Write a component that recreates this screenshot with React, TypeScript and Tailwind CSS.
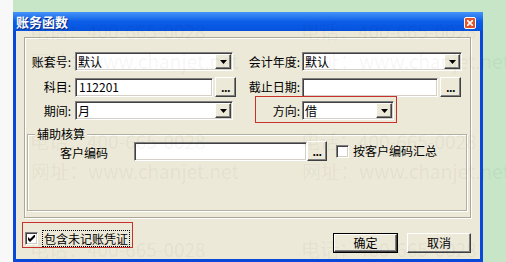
import type { ReactNode } from "react";

const raised =
  "border border-t-white border-l-white border-b-[#404040] border-r-[#404040] shadow-[inset_-1px_-1px_0_#808080] bg-[#ece9d8]";
const sunken =
  "border border-t-[#808080] border-l-[#808080] border-b-white border-r-white shadow-[inset_1px_1px_0_#404040,inset_-1px_-1px_0_#d4d0c8] bg-white";

function Arrow() {
  return (
    <svg width="7" height="4" viewBox="0 0 7 4">
      <path d="M0 0h7L3.5 4z" fill="#000" />
    </svg>
  );
}

function Combo({ value, w }: { value: string; w: string }) {
  return (
    <div className={`${sunken} ${w} h-[19px] flex items-center pl-[2px] pr-[1px]`}>
      <span className="flex-1 leading-none">{value}</span>
      <div className={`${raised} w-[16px] h-[15px] flex items-center justify-center`}>
        <Arrow />
      </div>
    </div>
  );
}

function Input({ value = "", w }: { value?: string; w: string }) {
  return (
    <div className={`${sunken} ${w} h-[19px] flex items-center pl-[3px] leading-none`}>
      {value}
    </div>
  );
}

function Dots({ w = "w-[21px]" }: { w?: string }) {
  return (
    <div className={`${raised} ${w} h-[20px] flex items-end justify-center pb-[3px] font-bold text-[11px] leading-none tracking-[-0.5px]`}>
      ...
    </div>
  );
}

function Check({ checked }: { checked?: boolean }) {
  return (
    <div className={`${sunken} w-[13px] h-[13px] flex items-center justify-center`}>
      {checked && (
        <svg width="7" height="7" viewBox="0 0 7 7">
          <path d="M0 2v3l2 2 5-5V-1L2 4z" fill="#000" />
        </svg>
      )}
    </div>
  );
}

function Label({ children, w }: { children: ReactNode; w: string }) {
  return <span className={`${w} text-right leading-none`}>{children}</span>;
}

const marks = [
  { t: "电话：400-665-0028", x: "left-[30px]", y: "top-[21px]" },
  { t: "电话：400-665-0028", x: "left-[301px]", y: "top-[21px]" },
  { t: "网址：www.chanjet.net", x: "left-[31px]", y: "top-[51px]" },
  { t: "网址：www.chanjet.net", x: "left-[302px]", y: "top-[51px]" },
  { t: "电话：400-665-0028", x: "left-[30px]", y: "top-[131px]" },
  { t: "电话：400-665-0028", x: "left-[301px]", y: "top-[131px]" },
  { t: "网址：www.chanjet.net", x: "left-[31px]", y: "top-[161px]" },
  { t: "网址：www.chanjet.net", x: "left-[302px]", y: "top-[161px]" },
  { t: "电话：400-665-0028", x: "left-[30px]", y: "top-[239px]" },
  { t: "电话：400-665-0028", x: "left-[301px]", y: "top-[239px]" },
];

export default function App() {
  return (
    <div className="relative flex w-[506px] h-[262px] overflow-hidden font-['Noto_Sans_CJK_SC',sans-serif] text-[12px] text-black">
      <div className="w-[13px] bg-[#f7f8f7]" />
      <div className="flex-1 bg-[#c6e6c7] pt-[12px]">
        {/* Dialog */}
        <div className="w-[470px] h-[250px] flex flex-col bg-[#0a48d9] rounded-t-[2px]">
          <div className="h-[19px] flex items-start pl-[3px] pr-[7px] bg-gradient-to-b from-[#4593f7] via-[#0b5de8] to-[#0652dd]">
            <span className="mt-[2px] text-white font-bold text-[13px] leading-[15px] [text-shadow:1px_1px_0_#0a2a80]">
              账务函数
            </span>
            <div className="ml-auto mt-[5px] w-[12px] h-[12px] rounded-[2px] border border-white bg-[#e2542b] flex items-center justify-center">
              <svg width="6" height="6" viewBox="0 0 6 6">
                <path d="M0 0L6 6M6 0L0 6" stroke="#fff" strokeWidth="1.6" />
              </svg>
            </div>
          </div>
          <div className="mx-[3px] mb-[3px] flex-1 bg-[#ece9d8] flex flex-col">
            {/* Main panel */}
            <div className="ml-[8px] mt-[6px] w-[447px] h-[181px] border border-[#aca899] shadow-[inset_1px_1px_0_#fff,1px_1px_0_#fff] flex flex-col pt-[14px]">
              <div className="flex items-center h-[19px]">
                <Label w="w-[46px]">账套号:</Label>
                <div className="ml-[4px]"><Combo value="默认" w="w-[158px]" /></div>
                <Label w="w-[67px]">会计年度:</Label>
                <div className="ml-[2px]"><Combo value="默认" w="w-[160px]" /></div>
              </div>
              <div className="flex items-center h-[20px] mt-[6px]">
                <Label w="w-[46px]">科目:</Label>
                <div className="ml-[4px]"><Input value="112201" w="w-[138px]" /></div>
                <div className="ml-[2px]"><Dots /></div>
                <Label w="w-[64px]">截止日期:</Label>
                <div className="ml-[2px]"><Input w="w-[136px]" /></div>
                <div className="ml-[2px]"><Dots /></div>
              </div>
              <div className="flex items-center h-[19px] mt-[4px]">
                <Label w="w-[46px]">期间:</Label>
                <div className="ml-[4px]"><Combo value="月" w="w-[158px]" /></div>
                <div className="ml-[22px] -mt-[5px] -mb-[3px] pt-[4px] pb-[2px] pl-[9px] pr-[2px] border border-[#c8302c] flex items-center">
                  <Label w="w-[35px]">方向:</Label>
                  <div className="ml-[2px]"><Combo value="借" w="w-[92px]" /></div>
                </div>
              </div>
              {/* Group box */}
              <div className="relative ml-[2px] mt-[14px] w-[440px] h-[77px] border border-[#b3b09f] shadow-[inset_1px_1px_0_#fff,1px_1px_0_#fff] pt-[6px]">
                <span className="absolute -top-[9px] left-[7px] px-[2px] bg-[#ece9d8] leading-[16px]">
                  辅助核算
                </span>
                <div className="flex items-center h-[20px]">
                  <span className="ml-[32px] mt-[3px] leading-none">客户编码</span>
                  <div className="ml-[26px]"><Input w="w-[173px]" /></div>
                  <Dots w="w-[20px]" />
                  <div className="ml-[9px]"><Check /></div>
                  <span className="ml-[4px] leading-none">按客户编码汇总</span>
                </div>
              </div>
            </div>
            {/* Bottom row */}
            <div className="flex items-start pl-[6px] pr-[9px] mt-[4px]">
              <div className="h-[26px] border border-[#c8302c] flex items-center pl-[2px] pr-[2px] pt-[6px]">
                <Check checked />
                <span className="ml-[4px] px-[1px] border border-dotted border-black leading-[15px]">
                  包含未记账凭证
                </span>
              </div>
              <div className="ml-auto mt-[11px] flex gap-[9px]">
                <div className="border border-black">
                  <div className={`${raised} w-[63px] h-[18px] flex items-center justify-center leading-none`}>确定</div>
                </div>
                <div className={`${raised} w-[64px] h-[20px] flex items-center justify-center leading-none`}>取消</div>
              </div>
            </div>
          </div>
        </div>
      </div>
      {/* Watermark */}
      {marks.map((m, i) => (
        <span
          key={i}
          className={`absolute ${m.x} ${m.y} pointer-events-none select-none whitespace-nowrap text-[19px] leading-[19px] text-black/[0.055]`}
        >
          {m.t}
        </span>
      ))}
    </div>
  );
}
